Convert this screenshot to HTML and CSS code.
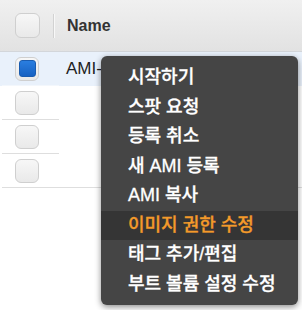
FILE: index.html
```html
<!DOCTYPE html>
<html lang="ko">
<head>
  <meta charset="UTF-8">
  <meta name="viewport" content="width=device-width, initial-scale=1.0">
  <title>AMI</title>
  <link rel="stylesheet" href="styles.css">
</head>
<body>
  <div class="grid">
    <div class="head">
      <div class="cell-check"><span class="box"></span></div>
      <div class="sep"></div>
      <div class="head-name">Name</div>
    </div>

    <div class="row selected">
      <div class="cell-check"><span class="box"><span class="tick"></span></span></div>
      <div class="cell-name">AMI-1</div>
    </div>
    <div class="row">
      <div class="cell-check"><span class="box"></span></div>
      <div class="cell-name"></div>
    </div>
    <div class="row">
      <div class="cell-check"><span class="box"></span></div>
      <div class="cell-name"></div>
    </div>
    <div class="row last">
      <div class="cell-check"><span class="box"></span></div>
      <div class="cell-name"></div>
    </div>
  </div>

  <ul class="menu">
    <li>시작하기</li>
    <li>스팟 요청</li>
    <li>등록 취소</li>
    <li>새 AMI 등록</li>
    <li>AMI 복사</li>
    <li class="active">이미지 권한 수정</li>
    <li>태그 추가/편집</li>
    <li>부트 볼륨 설정 수정</li>
  </ul>
</body>
</html>
```

FILE: styles.css
```css
body {
  margin: 0;
  background: #fff;
  font-family: "Liberation Sans", "Noto Sans CJK KR", sans-serif;
  width: 302px;
  height: 310px;
  overflow: hidden;
  position: relative;
}
.grid {
  padding-left: 2px;
}
.head {
  display: flex;
  align-items: center;
  height: 51px;
  margin-left: -2px;
  padding-left: 2px;
  background: linear-gradient(#f0f0f0, #e2e2e2);
  border-bottom: 1px solid #d3d6da;
}
.cell-check {
  width: 57px;
  flex: none;
  display: flex;
  align-items: center;
  padding-left: 13px;
  box-sizing: border-box;
}
.head .cell-check {
  width: 51px;
}
.box {
  width: 22px;
  height: 22px;
  border: 1px solid #cfcfcf;
  border-radius: 6px;
  background: linear-gradient(#f7f7f7, #e9e9e9);
  display: flex;
  align-items: center;
  justify-content: center;
}
.head .box {
  width: 23px;
  height: 23px;
}
.tick {
  width: 15px;
  height: 15px;
  border-radius: 3px;
  background: linear-gradient(#2a7ee0, #1761c2);
  border: 1px solid #1a5cb0;
}
.sep {
  width: 1px;
  height: 24px;
  background: #d2d2d2;
  box-shadow: 1px 0 0 #f8f8f8;
}
.head-name {
  padding-left: 13px;
  font-weight: bold;
  font-size: 16px;
  color: #333;
}
.row {
  display: flex;
  height: 34px;
}
.row .cell-check {
  border-bottom: 1px solid #dedede;
}
.row .cell-name {
  flex: 1;
  padding-left: 7px;
  font-size: 17px;
  line-height: 34px;
  color: #222;
}
.row.selected {
  margin-left: -2px;
  padding-left: 2px;
  background: #e9f1fb;
}
.row.selected .cell-check {
  border-bottom-color: #f3f7fc;
}
.row.last .cell-name {
  border-bottom: 1px solid #dedede;
}
.menu {
  position: absolute;
  left: 101px;
  top: 56px;
  width: 197px;
  height: 249px;
  margin: 0;
  padding: 7px 0 0;
  box-sizing: border-box;
  list-style: none;
  background: #454545;
  border-radius: 6px;
  box-shadow: 0 2px 6px rgba(0,0,0,0.45);
}
.menu li {
  height: 29.5px;
  line-height: 29.5px;
  padding-left: 27px;
  font-size: 18px;
  font-weight: 500;
  color: #fff;
  white-space: nowrap;
  -webkit-text-stroke: 0.3px #fff;
}
.menu li.active {
  background: #353535;
  color: #f39a2a;
  -webkit-text-stroke-color: #f39a2a;
}
```
